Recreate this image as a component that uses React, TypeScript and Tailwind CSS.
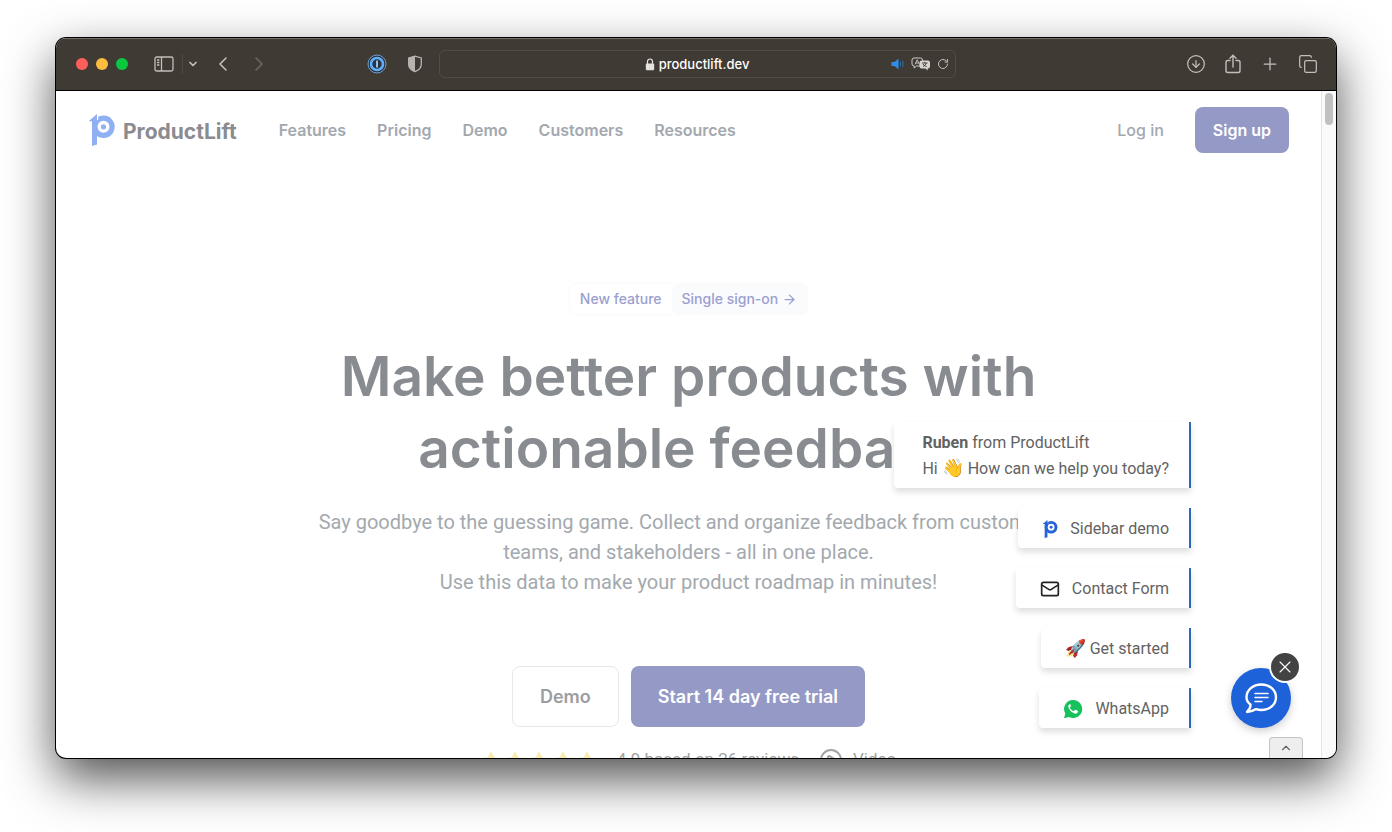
import React from 'react';
import {
  ArrowDownCircle, ArrowRight, ChevronDown, ChevronLeft, ChevronRight, ChevronUp,
  CirclePlay, Copy, Mail, Plus, RotateCw, X,
} from 'lucide-react';
import { FaStar } from 'react-icons/fa';

const navLinks = ['Features', 'Pricing', 'Demo', 'Customers', 'Resources'];

const LogoMark: React.FC<{ className?: string; color: string }> = ({ className, color }) => (
  <svg viewBox="0 0 27 32" className={className} aria-hidden="true">
    <circle cx="15.5" cy="12.8" r="11.2" fill={color} />
    <path d="M9.6 0v6" stroke="#fff" strokeWidth="1.2" />
    <path d="M.6 7.2 9 0v30.6L4 32V7.2z" fill={color} />
    <circle cx="15.5" cy="12.8" r="6" fill="#fff" />
    <circle cx="15.5" cy="12.8" r="2.6" fill={color} />
  </svg>
);

const SidebarIcon = () => (
  <svg viewBox="0 0 20 16" className="h-4 w-5" fill="none" stroke="currentColor" strokeWidth="1.3">
    <rect x="1" y="1" width="18" height="14" rx="1.8" />
    <path d="M7.5 1v14M3 4h2.4M3 6.5h2.4M3 9h2.4" />
  </svg>
);

const ShieldIcon = () => (
  <svg viewBox="0 0 16 18" className="h-[18px] w-4">
    <path d="M8 1.2 14.3 3v6.2c0 3.6-2.8 6-6.3 7.4C4.5 15.2 1.7 12.8 1.7 9.2V3z" fill="none" stroke="#b9b2ae" strokeWidth="1.3" />
    <path d="M8 1 1.3 3v6.2c0 3.8 2.9 6.3 6.7 7.8z" fill="#b9b2ae" />
  </svg>
);

const OnePasswordIcon = () => (
  <svg viewBox="0 0 20 20" className="size-5">
    <circle cx="10" cy="10" r="9" fill="#2a3440" stroke="#6f9fd0" strokeWidth="1" />
    <circle cx="10" cy="10" r="6" fill="none" stroke="#63adf5" strokeWidth="2.6" />
    <rect x="9" y="6.5" width="2" height="7" rx=".6" fill="#8cc2f5" />
  </svg>
);

const LockIcon = () => (
  <svg viewBox="0 0 10 13" className="h-[13px] w-2.5">
    <path d="M2.5 6V3.5a2.5 2.5 0 0 1 5 0V6" fill="none" stroke="#e4e1df" strokeWidth="1.2" />
    <rect x=".8" y="5.6" width="8.4" height="6.6" rx="1.2" fill="#e4e1df" />
  </svg>
);

const SpeakerIcon = () => (
  <svg viewBox="0 0 14 12" className="h-3 w-3.5">
    <path d="M.5 4h3L7.5.8v10.4L3.5 8h-3z" fill="#2f8ee8" />
    <path d="M9.3 4q1 2 0 4M11.3 2.6q2 3.4 0 6.8" fill="none" stroke="#2e6fae" strokeWidth="1" />
  </svg>
);

const TranslateIcon = () => (
  <svg viewBox="0 0 20 14" className="h-3.5 w-5">
    <path d="M3 1h6.5q2 0 2 2v4q0 2-2 2H5.5L3.2 11V9Q1 9 1 7V3q0-2 2-2z" fill="none" stroke="#cfcac6" />
    <path d="M4 7.5 6.2 2.8l2.2 4.7M4.8 6h2.8" fill="none" stroke="#cfcac6" strokeWidth=".9" />
    <path d="M10.5 3.5h6.5q2 0 2 2v4q0 2-2 2h-.3v2L14.5 11.5h-4q-2 0-2-2v-4q0-2 2-2z" fill="#d8d4d0" />
    <path d="M11 6h5.5M13.7 5v1M12 9.5q2.6-1 3.3-3.5M12 7q1 2 3.7 2.6" fill="none" stroke="#403a35" strokeWidth=".9" />
  </svg>
);

const ShareIcon = () => (
  <svg viewBox="0 0 18 20" className="h-5 w-[18px]" fill="none" stroke="currentColor" strokeWidth="1.4" strokeLinecap="round">
    <path d="M6 6.5H3.8Q2 6.5 2 8.3v8.4q0 1.8 1.8 1.8h10.4q1.8 0 1.8-1.8V8.3q0-1.8-1.8-1.8H12M9 13V1.5M6 4.2l3-3 3 3" />
  </svg>
);

const WhatsAppIcon = () => (
  <svg viewBox="0 0 20 20" className="size-5">
    <path d="M10.2 1a9 9 0 1 1-4.3 16.9L1 19.2l1.3-4.7A9 9 0 0 1 10.2 1z" fill="#17c15c" />
    <path d="M7.7 5.7c-.3-.6-.6-.6-1.1-.5-1.5.6-1.7 2.5-.8 4.1 1.3 2.4 3.2 4.3 5.7 5.2 1.6.5 3.3-.3 3.5-1.9.1-.5-.1-.7-.5-.9l-1.9-.9c-.4-.2-.6-.1-.8.2l-.7.9c-.2.2-.4.3-.7.1-1.5-.6-2.6-1.6-3.4-3-.1-.3-.1-.4.1-.6l.6-.8c.2-.2.2-.4.1-.6z" fill="#fff" />
  </svg>
);

const ChatIcon = () => (
  <svg viewBox="0 0 34 32" className="h-8 w-[34px]" fill="none" stroke="#fff" strokeLinecap="round" strokeLinejoin="round">
    <path d="M6.5 22.5C4 20.8 2.5 18.4 2.5 15.3 2.5 8 9 2.5 17.3 2.5S32 8 32 15.3 25.6 28 17.3 28q-2.8 0-5.3-.9Q8.5 29.6 3 30 6.8 26.5 6.5 22.5z" strokeWidth="2.4" />
    <path d="M11 11.5h13M11 15.5h13M11 19.5h7" strokeWidth="1.5" />
  </svg>
);

const Toolbar = () => (
  <header className="flex h-[53px] shrink-0 items-center justify-between border-b border-black bg-[#403a35] pr-[18px] pl-5 text-[#c4beb9] shadow-[inset_0_1px_0_#736d69]">
    <div className="flex flex-1 items-center">
      <div className="flex gap-2">
        <span className="size-3 rounded-full bg-[#fe5f5b]" />
        <span className="size-3 rounded-full bg-[#fdbc40]" />
        <span className="size-3 rounded-full bg-[#09c840]" />
      </div>
      <button aria-label="Sidebar" className="ml-[26px]"><SidebarIcon /></button>
      <button aria-label="Tab groups" className="ml-2 border-l border-[#4f4944] py-1 pl-1"><ChevronDown size={12} strokeWidth={3.5} /></button>
      <button aria-label="Back" className="ml-3"><ChevronLeft size={24} strokeWidth={1.6} /></button>
      <button aria-label="Forward" className="ml-3 text-[#6c6661]"><ChevronRight size={24} strokeWidth={1.6} /></button>
      <button aria-label="1Password" className="mr-5 ml-auto"><OnePasswordIcon /></button>
      <button aria-label="Privacy report" className="mr-4"><ShieldIcon /></button>
    </div>
    <div className="flex h-7 w-[42%] max-w-[517px] items-center rounded-md border border-[#534c46] px-1.5">
      <div className="flex-1" />
      <div className="flex items-center gap-1 pt-px text-[13px] font-medium text-white">
        <LockIcon />
        productlift.dev
      </div>
      <div className="flex flex-1 items-center justify-end gap-1.5">
        <SpeakerIcon />
        <TranslateIcon />
        <button aria-label="Reload"><RotateCw size={12} /></button>
      </div>
    </div>
    <div className="flex flex-1 items-center justify-end gap-[18px]">
      <button aria-label="Downloads"><ArrowDownCircle size={20} strokeWidth={1.5} /></button>
      <button aria-label="Share"><ShareIcon /></button>
      <button aria-label="New tab"><Plus size={20} strokeWidth={1.5} /></button>
      <button aria-label="Tabs"><Copy size={20} strokeWidth={1.5} /></button>
    </div>
  </header>
);

const SiteNav = () => (
  <nav className="flex items-center justify-between px-8 pt-4 font-semibold text-[#a3a8af]">
    <div className="flex items-center gap-[31px]">
      <a href="#home" className="mr-[11px] flex items-center gap-2">
        <LogoMark color="#8fb0f3" className="h-8 w-[27px]" />
        <span className="pt-1 text-[21px] leading-7 font-bold text-[#8b8b90]">ProductLift</span>
      </a>
      {navLinks.map((link) => (
        <a key={link} href={`#${link.toLowerCase()}`}>{link}</a>
      ))}
    </div>
    <div className="flex items-center gap-[31px]">
      <a href="#login" className="font-medium">Log in</a>
      <button className="h-[46px] rounded-lg bg-[#9599c6] px-[18px] text-white">Sign up</button>
    </div>
  </nav>
);

const Hero = () => (
  <main className="flex flex-col items-center pt-[131px] text-center">
    <a href="#sso" className="flex h-[30px] items-center rounded-md text-sm font-medium text-[#9b9fcf] shadow-[0_0_3px_#f3f3f7]">
      <span className="px-2.5">New feature</span>
      <span className="flex h-full items-center gap-1 rounded-md bg-[#fafbfd] px-2.5">
        Single sign-on <ArrowRight size={15} />
      </span>
    </a>
    <h1 className="mt-[26px] text-[55px] leading-[72px] font-semibold text-[#888b90]">
      Make better products with<br />actionable feedback
    </h1>
    <p className="mt-[23px] font-['Roboto',sans-serif] text-[20px] leading-[30px] text-[#a3a9ae]">
      Say goodbye to the guessing game. Collect and organize feedback from customers,<br />
      teams, and stakeholders - all in one place.<br />
      Use this data to make your product roadmap in minutes!
    </p>
    <div className="mt-[69px] flex gap-3 text-lg font-semibold">
      <button className="h-[61px] rounded-lg border border-[#e8e8ea] px-[27px] text-[#9b9d9f]">Demo</button>
      <button className="h-[61px] rounded-lg bg-[#9599c6] px-[27px] text-white">Start 14 day free trial</button>
    </div>
    <div className="mt-5 flex items-center gap-5 font-['Roboto',sans-serif] text-[17px] text-[#a3a3a3]">
      <div className="flex gap-1 pt-0.5 text-[#f9ecb0]">
        {[1, 2, 3, 4, 5].map((n) => <FaStar key={n} size={20} />)}
      </div>
      <span>4.9 based on 26 reviews</span>
      <a href="#video" className="flex items-center gap-2.5"><CirclePlay size={24} />Video</a>
    </div>
  </main>
);

const card = 'flex items-center rounded-l-[4px] border-r-2 border-[#2b68b8] bg-white pt-0.5 pr-5 shadow-[0_4px_6px_rgba(0,0,0,0.13)]';

const ChatWidget = () => (
  <div className="absolute right-[30px] bottom-[30px] flex items-end gap-10">
    <div className="flex flex-col items-end gap-5 font-['Roboto',sans-serif] text-base text-[#626262]">
      <div className={`${card} h-[66px] pl-7`}>
        <p className="leading-[26px]">
          <b>Ruben</b> from ProductLift<br />
          Hi <span className="text-lg leading-none">👋</span> How can we help you today?
        </p>
      </div>
      <button className={`${card} h-10 gap-3 pl-6`}><LogoMark color="#2563d8" className="h-[18px] w-4" />Sidebar demo</button>
      <button className={`${card} h-10 gap-3 pl-6`}><Mail size={20} className="text-[#222]" />Contact Form</button>
      <button className={`${card} h-10 gap-1 pl-6`}><span className="text-[17px]">🚀</span>Get started</button>
      <button className={`${card} h-10 gap-3 pl-6`}><WhatsAppIcon />WhatsApp</button>
    </div>
    <div className="relative">
      <button aria-label="Open chat" className="flex size-[60px] items-center justify-center rounded-full bg-[#1d62d8] shadow-[0_3px_8px_rgba(0,0,0,0.2)]">
        <ChatIcon />
      </button>
      <button aria-label="Close" className="absolute -top-[17px] -right-[10px] flex size-8 items-center justify-center rounded-full border-2 border-white bg-[#434343] text-white">
        <X size={20} strokeWidth={1.3} />
      </button>
    </div>
  </div>
);

const App: React.FC = () => (
  <div className="flex h-screen flex-col overflow-hidden bg-white px-[56px] pt-[38px] pb-[74px] font-['Inter',sans-serif]">
    <div className="flex min-h-0 flex-1 flex-col overflow-hidden rounded-[10px] bg-white shadow-[0_0_0_1px_#000,0_20px_50px_rgba(0,0,0,0.7)]">
      <Toolbar />
      <div className="flex min-h-0 flex-1">
        <div className="relative min-w-0 flex-1 overflow-hidden">
          <SiteNav />
          <Hero />
          <ChatWidget />
          <button aria-label="Back to top" className="absolute right-[18px] bottom-0 flex h-[21px] w-[34px] items-center justify-center rounded-t-[4px] border border-b-0 border-[#c4c4c4] bg-[#eeeeee] text-[#666]">
            <ChevronUp size={14} />
          </button>
        </div>
        <div className="w-[15px] border-l border-[#e5e5e5] bg-[#fafafa] px-[3px] pt-[2px]">
          <div className="h-8 w-2 rounded-full bg-[#c1c1c1]" />
        </div>
      </div>
    </div>
  </div>
);

export default App;
